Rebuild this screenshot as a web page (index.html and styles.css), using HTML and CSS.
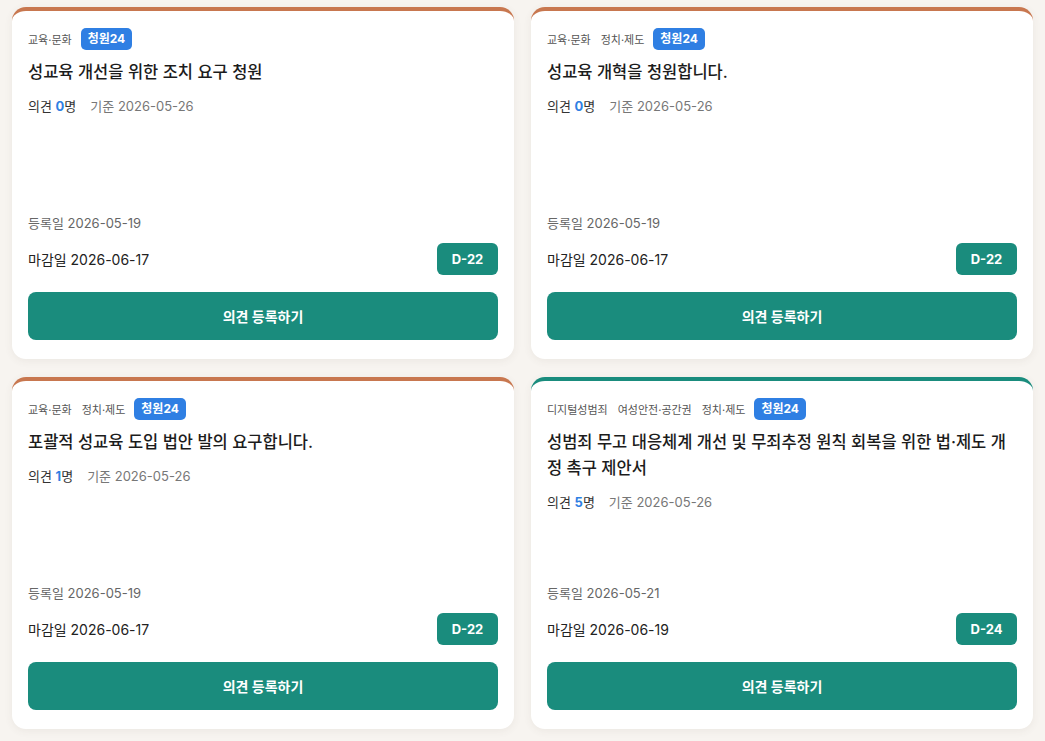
FILE: index.html
```html
<!DOCTYPE html>
<html lang="ko">
<head>
<meta charset="utf-8">
<title>청원 목록</title>
<link rel="stylesheet" href="styles.css">
</head>
<body>
<main class="grid">
  <article class="card card-orange">
    <div class="tags">
      <span class="tag">교육·문화</span>
      <span class="badge">청원24</span>
    </div>
    <h3 class="title">성교육 개선을 위한 조치 요구 청원</h3>
    <div class="meta">
      <span class="count">의견 <b>0</b>명</span>
      <span class="base">기준 2026-05-26</span>
    </div>
    <div class="bottom">
      <div class="reg">등록일 2026-05-19</div>
      <div class="due-row">
        <span class="due">마감일 2026-06-17</span>
        <span class="dday">D-22</span>
      </div>
      <button class="btn">의견 등록하기</button>
    </div>
  </article>

  <article class="card card-orange">
    <div class="tags">
      <span class="tag">교육·문화</span>
      <span class="tag">정치·제도</span>
      <span class="badge">청원24</span>
    </div>
    <h3 class="title">성교육 개혁을 청원합니다.</h3>
    <div class="meta">
      <span class="count">의견 <b>0</b>명</span>
      <span class="base">기준 2026-05-26</span>
    </div>
    <div class="bottom">
      <div class="reg">등록일 2026-05-19</div>
      <div class="due-row">
        <span class="due">마감일 2026-06-17</span>
        <span class="dday">D-22</span>
      </div>
      <button class="btn">의견 등록하기</button>
    </div>
  </article>

  <article class="card card-orange">
    <div class="tags">
      <span class="tag">교육·문화</span>
      <span class="tag">정치·제도</span>
      <span class="badge">청원24</span>
    </div>
    <h3 class="title">포괄적 성교육 도입 법안 발의 요구합니다.</h3>
    <div class="meta">
      <span class="count">의견 <b>1</b>명</span>
      <span class="base">기준 2026-05-26</span>
    </div>
    <div class="bottom">
      <div class="reg">등록일 2026-05-19</div>
      <div class="due-row">
        <span class="due">마감일 2026-06-17</span>
        <span class="dday">D-22</span>
      </div>
      <button class="btn">의견 등록하기</button>
    </div>
  </article>

  <article class="card card-teal">
    <div class="tags">
      <span class="tag">디지털성범죄</span>
      <span class="tag">여성안전·공간권</span>
      <span class="tag">정치·제도</span>
      <span class="badge">청원24</span>
    </div>
    <h3 class="title">성범죄 무고 대응체계 개선 및 무죄추정 원칙 회복을 위한 법·제도 개정 촉구 제안서</h3>
    <div class="meta">
      <span class="count">의견 <b>5</b>명</span>
      <span class="base">기준 2026-05-26</span>
    </div>
    <div class="bottom">
      <div class="reg">등록일 2026-05-21</div>
      <div class="due-row">
        <span class="due">마감일 2026-06-19</span>
        <span class="dday">D-24</span>
      </div>
      <button class="btn">의견 등록하기</button>
    </div>
  </article>
</main>
</body>
</html>
```

FILE: styles.css
```css
* { box-sizing: border-box; }

html, body {
  margin: 0;
  padding: 0;
  background: #f7f4f0;
}

body {
  font-family: Inter, "Noto Sans CJK KR", "Noto Sans", sans-serif;
  color: #222;
  padding: 7px 12px 12px 12px;
}

.grid {
  display: grid;
  grid-template-columns: 1fr 1fr;
  column-gap: 17px;
  row-gap: 18px;
}

.card {
  background: #fff;
  border-radius: 14px;
  border-top: 4px solid #c8774f;
  box-shadow: 0 2px 8px rgba(90, 70, 50, 0.07);
  padding: 17px 16px 19px 16px;
  min-height: 352px;
  display: flex;
  flex-direction: column;
}

.card-orange { border-top-color: #c8774f; }
.card-teal { border-top-color: #1a8c7d; }

.tags {
  display: flex;
  align-items: center;
  height: 22px;
}

.tag {
  font-size: 11px;
  color: #555;
  margin-right: 10px;
}

.badge {
  margin-left: -1px;
  background: #2f7fe3;
  color: #fff;
  font-weight: 700;
  font-size: 12px;
  padding: 0 7px;
  height: 22px;
  line-height: 22px;
  border-radius: 5px;
}

.title {
  margin: 9px 0 0 0;
  font-size: 16.5px;
  font-weight: 500;
  line-height: 26px;
  color: #1c1c1c;
}

.meta {
  margin-top: 11px;
  display: flex;
  align-items: baseline;
  gap: 14px;
  line-height: 20px;
}

.count {
  font-size: 13px;
  color: #333;
}

.count b {
  color: #2f7fe3;
  font-weight: 700;
}

.base {
  font-size: 13px;
  color: #777;
}

.bottom {
  margin-top: auto;
}

.reg {
  font-size: 13px;
  color: #666;
  line-height: 20px;
}

.due-row {
  margin-top: 10px;
  display: flex;
  align-items: center;
  justify-content: space-between;
}

.due {
  font-size: 14px;
  color: #222;
}

.dday {
  background: #1a8c7d;
  color: #fff;
  font-weight: 700;
  font-size: 13px;
  width: 61px;
  height: 32px;
  line-height: 32px;
  text-align: center;
  border-radius: 6px;
}

.btn {
  margin-top: 17px;
  width: 100%;
  height: 48px;
  border: 0;
  border-radius: 8px;
  background: #1a8c7d;
  color: #fff;
  font-family: inherit;
  font-weight: 700;
  font-size: 14px;
  cursor: pointer;
}
```
